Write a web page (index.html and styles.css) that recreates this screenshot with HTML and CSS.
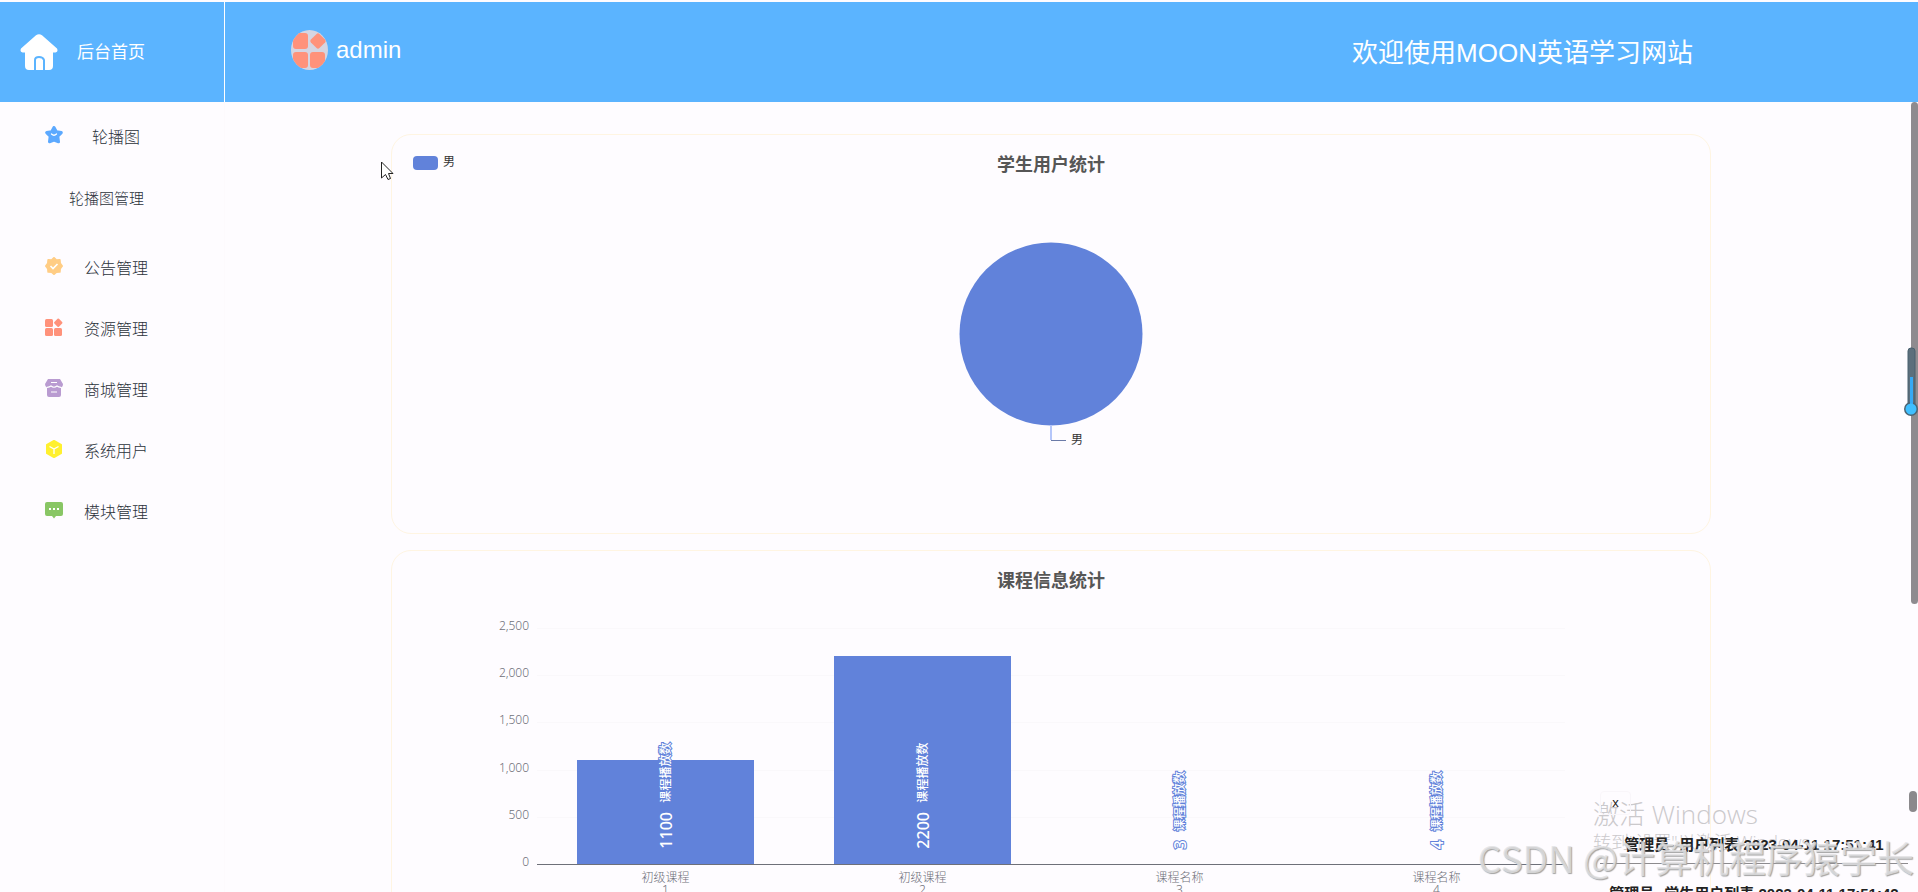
FILE: index.html
```
<!DOCTYPE html>
<html lang="zh-CN">

<head>
    <meta charset="utf-8" />
    <meta name="viewport" content="width=device-width, initial-scale=1">
    <title>后台首页</title>
    <link rel="stylesheet" href="styles.css">
</head>

<body>
    <header class="topbar">
        <a class="home" href="#">
            <svg class="home-icon" viewBox="0 0 38 36">
                <path d="M16 1.300Q19-1 22 1.300L37 14.500Q38.500 18 35.500 18.500H33V32Q33 36 29 36H9Q5 36 5 32V18.500H2.500Q-.500 18 1 14.500Z" fill="#fff" />
                <path d="M15 36V26Q15 23 19 23T24 26V36" fill="none" stroke="#5bb4ff" stroke-width="2" />
            </svg>
            <span>后台首页</span>
        </a>
        <div class="user">
            <svg class="avatar" viewBox="0 0 37 40">
                <defs>
                    <clipPath id="round"><ellipse cx="18.500" cy="20" rx="18.500" ry="20" /></clipPath>
                </defs>
                <g clip-path="url(#round)">
                    <rect width="37" height="40" fill="#d5d5e2" />
                    <g fill="#ff927b">
                        <rect x="2" y="3" width="15" height="16" rx="3" />
                        <rect x="2" y="22" width="15" height="16" rx="3" />
                        <rect x="19" y="22" width="15" height="16" rx="3" />
                        <rect x="21" y="5" width="12" height="12" rx="2" transform="rotate(45 27 11)" />
                    </g>
                </g>
            </svg>
            <span>admin</span>
        </div>
        <h1>欢迎使用MOON英语学习网站</h1>
    </header>

    <div class="layout">
        <nav class="sidebar">
            <a class="item" href="#">
                <svg viewBox="0 0 18 18">
                    <path d="M9 1.500l2.300 4.300 5 .800-3.500 3.700.700 5.500L9 14.200 4.500 15.800l.700-5.500L1.700 6.600l5-.800z" fill="#5ca9ff" stroke="#5ca9ff" stroke-width="3" stroke-linejoin="round" />
                    <path d="M6.500 8q2.500 2.500 5 0" fill="none" stroke="#fff" stroke-width="1.300" stroke-linecap="round" />
                </svg>
                <span>轮播图</span>
            </a>
            <div class="submenu">
                <a href="#">轮播图管理</a>
            </div>
            <a class="item" href="#">
                <svg viewBox="0 0 18 18">
                    <path d="M9 1l2.300 2.200 3.400-.300.300 3.400L17 9l-2 2.700-.300 3.100-3.400.200L9 17l-2.300-2-3.400-.200L3 11.700 1 9l2-2.700.300-3.400 3.400.300z" fill="#ffcd85" stroke="#ffcd85" stroke-width="2" stroke-linejoin="round" />
                    <path d="M5.500 9l2.500 2.500 4.500-4.500" fill="none" stroke="#fff" stroke-width="1.600" />
                </svg>
                <span>公告管理</span>
            </a>
            <a class="item" href="#">
                <svg viewBox="0 0 18 18" fill="#ff927b">
                    <rect y="1" width="8" height="8" rx="1.500" />
                    <rect y="10" width="8" height="8" rx="1.500" />
                    <rect x="9" y="10" width="8" height="8" rx="1.500" />
                    <rect x="10" y="1.500" width="6.500" height="6.500" rx="1" transform="rotate(45 13.250 4.750)" />
                </svg>
                <span>资源管理</span>
            </a>
            <a class="item" href="#">
                <svg viewBox="0 0 18 18">
                    <path d="M3 0H15L18 5Q18 8 15.500 8.500H16V16Q16 18 14 18H4Q2 18 2 16V8.500Q0 8 0 5Z" fill="#b99bd1" />
                    <path d="M6 3.500H12M2 8.300Q4.500 8.300 6 7 9 9.500 12 7 13.500 8.300 16 8.300M6 13H12" fill="none" stroke="#fff" stroke-width="1.200" />
                </svg>
                <span>商城管理</span>
            </a>
            <a class="item" href="#">
                <svg viewBox="0 0 18 18">
                    <path d="M9 1L16 4.800V13.200L9 17 2 13.200V4.800Z" fill="#fff02f" stroke="#fff02f" stroke-width="2" stroke-linejoin="round" />
                    <path d="M4.500 6.500L9 9 13.500 6.500M9 9V14" fill="none" stroke="#fff" stroke-width="1.300" />
                </svg>
                <span>系统用户</span>
            </a>
            <a class="item" href="#">
                <svg viewBox="0 0 18 18">
                    <path d="M2 1H16Q18 1 18 3V13Q18 15 16 15H11L9 17.500 7 15H2Q0 15 0 13V3Q0 1 2 1Z" fill="#89c665" />
                    <path d="M4 7h2v2H4zM8 7h2v2H8zM12 7h2v2h-2z" fill="#fff" />
                </svg>
                <span>模块管理</span>
            </a>
        </nav>

        <main>
            <section class="panel">
                <h2>学生用户统计</h2>
                <div class="legend"><i></i>男</div>
                <svg class="pie" viewBox="0 0 184 206">
                    <circle cx="92" cy="92" r="91.500" fill="#6182da" />
                    <path d="M92 183V198" stroke="#b5c6fa" stroke-width="2" />
                    <path d="M92 198.500H107" stroke="#6b7ba8" />
                    <text x="112" y="202">男</text>
                </svg>
            </section>

            <section class="panel">
                <h2>课程信息统计</h2>
                <div class="chart">
                    <div class="scale">
                        <span>2,500</span>
                        <span>2,000</span>
                        <span>1,500</span>
                        <span>1,000</span>
                        <span>500</span>
                        <span>0</span>
                    </div>
                    <div class="plot">
                        <div class="col">
                            <div class="bar" style="height: 44%"></div>
                            <p class="value">1100<small>课程播放数</small></p>
                        </div>
                        <div class="col">
                            <div class="bar" style="height: 88%"></div>
                            <p class="value">2200<small>课程播放数</small></p>
                        </div>
                        <div class="col">
                            <div class="bar" style="height: 0%"></div>
                            <p class="value">3<small>课程播放数</small></p>
                        </div>
                        <div class="col">
                            <div class="bar" style="height: 0%"></div>
                            <p class="value">4<small>课程播放数</small></p>
                        </div>
                    </div>
                    <div class="names">
                        <span>初级课程<br>1</span>
                        <span>初级课程<br>2</span>
                        <span>课程名称<br>3</span>
                        <span>课程名称<br>4</span>
                    </div>
                </div>
            </section>
        </main>
    </div>

    <div class="scroll-thumb"></div>

    <div class="activate">
        <p class="activate-title">激活 Windows</p>
        <p>转到"设置"以激活 Windows。</p>
    </div>

    <aside class="notices">
        <button type="button">x</button>
        <ul>
            <li>管理员--用户列表 2023-04-11 17:51:41</li>
            <li>管理员--学生用户列表 2023-04-11 17:51:42</li>
        </ul>
        <div class="notices-thumb"></div>
    </aside>

    <div class="credit">CSDN @计算机程序猿学长</div>

    <svg class="gauge" viewBox="0 0 16 70">
        <rect x="5" y="1" width="7" height="60" rx="3" fill="#5c6f7c" stroke="#48606e" />
        <circle cx="8" cy="62" r="7" fill="#4b6473" />
        <path d="M8.500 30V60" stroke="#37a9f5" stroke-width="3" />
        <circle cx="8" cy="62" r="5.500" fill="#40bfff" />
    </svg>

    <svg class="cursor" viewBox="0 0 13 20">
        <path d="M.500 1V17L4.500 13.500 7 18.500 9.500 17.500 7.500 12.500H12Z" fill="#fff" stroke="#222" />
    </svg>
</body>

</html>
```
FILE: styles.css
```
:root {
    --bg-color: #fefcff;
    --header-color: #5bb4ff;
    --chart-color: #6182da;
    --border-color: #fff5e2;
    --axis-color: #6e7079;
}

* {
    box-sizing: border-box;
}

body {
    margin: 0;
    height: 100vh;
    padding-top: 2px;
    overflow: hidden;
    position: relative;
    display: flex;
    flex-direction: column;
    font-family: "Liberation Sans", "Noto Sans CJK SC", sans-serif;
    background-color: var(--bg-color);
}

h1,
h2,
p,
ul {
    margin: 0;
    padding: 0;
    font-weight: normal;
}

a {
    color: inherit;
    text-decoration: none;
}

.topbar {
    flex: none;
    height: 100px;
    display: flex;
    align-items: center;
    color: #fff;
    background-color: var(--header-color);
}

.home {
    width: 225px;
    height: 100%;
    padding-left: 20px;
    display: flex;
    align-items: center;
    gap: 19px;
    font-size: 17px;
    border-right: 1px solid #fff;
}

.home-icon {
    width: 38px;
    height: 36px;
}

.home span,
.topbar h1 {
    padding-bottom: 4px;
}

.user {
    margin-left: 66px;
    padding-bottom: 4px;
    display: flex;
    align-items: center;
    gap: 8px;
    font-size: 24px;
}

.avatar {
    width: 37px;
    height: 40px;
}

.topbar h1 {
    margin-left: auto;
    margin-right: 225px;
    font-size: 26px;
}

.layout {
    flex: 1;
    min-height: 0;
    display: flex;
}

.sidebar {
    flex: none;
    width: 225px;
    padding-top: 3px;
    color: #2b313a;
    font-weight: 300;
    border-right: 1px solid #fdfafd;
}

.item {
    height: 61px;
    padding-left: 45px;
    display: flex;
    align-items: center;
    gap: 21px;
    font-size: 16px;
}

.item svg {
    width: 18px;
    height: 18px;
    margin-bottom: 2px;
}

.item span {
    width: 64px;
    text-align: center;
}

.submenu {
    height: 70px;
    padding-left: 69px;
    font-size: 15px;
    line-height: 65px;
}

main {
    flex: 1;
    padding: 32px 207px 0 166px;
    overflow: hidden;
}

.panel {
    height: 400px;
    margin-bottom: 16px;
    padding-top: 17px;
    position: relative;
    border: 1px solid var(--border-color);
    border-radius: 20px;
}

.panel h2 {
    color: #565656;
    font-size: 18px;
    font-weight: bold;
    line-height: 26px;
    text-align: center;
}

.legend {
    position: absolute;
    top: 18px;
    left: 21px;
    display: flex;
    align-items: center;
    gap: 5px;
    color: #333;
    font-size: 12px;
    line-height: 18px;
}

.legend i {
    width: 25px;
    height: 14px;
    margin-top: 2px;
    border-radius: 4px;
    background-color: var(--chart-color);
}

.pie {
    display: block;
    width: 184px;
    height: 206px;
    margin: 64px auto 0;
    overflow: visible;
    font-size: 12px;
}

.pie text {
    fill: #333;
}

.chart {
    display: grid;
    grid-template-columns: 137px 1fr;
    column-gap: 8px;
    margin-top: 26px;
    padding-right: 145px;
    color: var(--axis-color);
    font-family: "Noto Sans", "Noto Sans CJK SC", sans-serif;
    font-size: 12px;
    font-weight: 300;
}

.scale {
    height: 248px;
    margin-bottom: -12px;
    display: flex;
    flex-direction: column;
    justify-content: space-between;
    line-height: 12px;
    text-align: right;
}

.plot {
    height: 237px;
    margin-top: 8px;
    display: grid;
    grid-template-columns: repeat(4, 1fr);
    border-bottom: 1px solid var(--axis-color);
    background: repeating-linear-gradient(#faf8fb 0 1px, transparent 1px 20%);
}

.col {
    position: relative;
    display: flex;
    align-items: flex-end;
    justify-content: center;
}

.bar {
    width: 69%;
    background-color: var(--chart-color);
}

/* series label, read from the bottom up */
.value {
    position: absolute;
    bottom: 15px;
    display: flex;
    align-items: center;
    gap: 9px;
    writing-mode: vertical-rl;
    text-orientation: sideways;
    transform: rotate(180deg);
    color: #fff;
    font-size: 16px;
    font-weight: 500;
    line-height: 18px;
    -webkit-text-stroke: 2px var(--chart-color);
    paint-order: stroke fill;
}

.value small {
    font-size: 12px;
}

.names {
    grid-column: 2;
    padding-top: 7px;
    display: grid;
    grid-template-columns: repeat(4, 1fr);
    line-height: 12px;
    text-align: center;
}

.scroll-thumb {
    position: absolute;
    top: 102px;
    right: 0;
    width: 7px;
    height: 502px;
    border-radius: 4px;
    background-color: #8e8b8f;
}

.activate {
    position: absolute;
    right: 98px;
    bottom: 38px;
    width: 227px;
    color: #cbc9cc;
    font-family: "Open Sans", "Noto Sans CJK SC", sans-serif;
    font-size: 18px;
    line-height: 24px;
    white-space: nowrap;
}

.activate p {
    font-weight: 300;
}

.activate .activate-title {
    font-size: 26px;
    line-height: 32px;
}

.notices {
    position: absolute;
    right: 0;
    bottom: 0;
    width: 318px;
    height: 101px;
    overflow: hidden;
    font-size: 15px;
}

.notices button {
    display: block;
    width: 31px;
    height: 24px;
    padding: 0;
    color: #222;
    font-family: inherit;
    font-size: 13px;
    line-height: 18px;
    border: 1px solid #f9f6fa;
    border-radius: 4px;
    background: none;
}

.notices ul {
    padding-right: 10px;
    list-style: none;
}

.notices li {
    height: 49px;
    padding-top: 11px;
    color: #222;
    font-weight: bold;
    line-height: 38px;
    text-align: center;
    white-space: nowrap;
    border-bottom: 1px solid #8d8b8e;
}

.notices-thumb {
    position: absolute;
    top: 0;
    right: 1px;
    width: 8px;
    height: 21px;
    border-radius: 4px;
    background-color: #8b898c;
}

.credit {
    position: absolute;
    right: 4px;
    bottom: 11px;
    color: rgba(226, 226, 228, 0.8);
    font-family: "Noto Sans CJK SC", sans-serif;
    font-size: 37px;
    line-height: 48px;
    text-shadow: 1px 1px 1px #a2a2a2;
    white-space: nowrap;
}

.gauge {
    position: absolute;
    top: 347px;
    right: -1px;
    width: 16px;
    height: 70px;
}

.cursor {
    position: absolute;
    top: 161px;
    left: 381px;
    width: 13px;
    height: 20px;
}
```
